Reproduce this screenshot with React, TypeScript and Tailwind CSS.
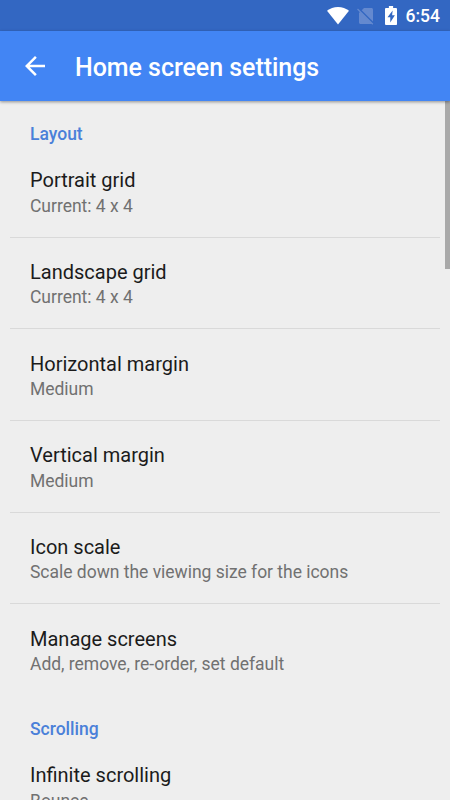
import React from 'react';

interface Preference {
  title: string;
  summary: string;
}

interface Section {
  name: string;
  items: Preference[];
}

const sections: Section[] = [
  {
    name: 'Layout',
    items: [
      { title: 'Portrait grid', summary: 'Current: 4 x 4' },
      { title: 'Landscape grid', summary: 'Current: 4 x 4' },
      { title: 'Horizontal margin', summary: 'Medium' },
      { title: 'Vertical margin', summary: 'Medium' },
      { title: 'Icon scale', summary: 'Scale down the viewing size for the icons' },
      { title: 'Manage screens', summary: 'Add, remove, re-order, set default' },
    ],
  },
  {
    name: 'Scrolling',
    items: [{ title: 'Infinite scrolling', summary: 'Bounce' }],
  },
];

const StatusBar: React.FC = () => (
  <div className="flex h-[31px] shrink-0 items-center justify-end bg-[#3367c2] pr-[10px] text-white">
    <svg className="h-[18px] w-[22px]" viewBox="0 0 22 18" fill="currentColor">
      <path d="M11 17.5 0 3.800C3 1.400 6.800 0 11 0s8 1.400 11 3.800z" />
    </svg>
    <svg className="ml-[7px] h-[18px] w-[18px]" viewBox="0 0 18 18">
      <path
        d="M8 1h7.500c.8 0 1.500.7 1.500 1.500V17H4.500C3.700 17 3 16.300 3 15.500V6z"
        fill="#6489cf"
      />
      <path d="M2.500 1.300 17.800 16.600" stroke="#3367c2" strokeWidth="1.800" />
      <path d="M1.500 2 16.800 17.300" stroke="#6489cf" strokeWidth="1.300" />
    </svg>
    <svg className="ml-[11px] h-[19px] w-3" viewBox="0 0 13 19" preserveAspectRatio="none">
      <path
        d="M4.200 0h4.600v2H12c.6 0 1 .4 1 1v15c0 .6-.4 1-1 1H1c-.6 0-1-.4-1-1V3c0-.6.400-1 1-1h3.200z"
        fill="currentColor"
      />
      <path d="M8.300 4.500 2.700 11.300h3v5.200l5-7.200H7.700z" fill="#3367c2" />
    </svg>
    <span className="ml-[9px] pt-px text-[17.5px] font-medium leading-5">6:54</span>
  </div>
);

const AppBar: React.FC = () => (
  <header className="relative z-10 flex h-[70px] shrink-0 items-center bg-[#4285f4] pl-[25px] text-white shadow-[0_1px_3px_rgba(0,0,0,0.4)]">
    <button type="button" aria-label="Back" className="flex">
      <svg className="h-5 w-5" viewBox="4 4 16 16" fill="currentColor">
        <path d="M20 11H7.830l5.590-5.590L12 4l-8 8 8 8 1.410-1.410L7.830 13H20v-2z" />
      </svg>
    </button>
    <h1 className="ml-[30px] pt-1 text-[25px] font-medium leading-[30px] tracking-[-0.04px]">
      Home screen settings
    </h1>
  </header>
);

const PreferenceRow: React.FC<Preference> = ({ title, summary }) => (
  <li className="mx-[10px] h-[91.67px] border-b border-[#d9d9d9] px-5 pt-[21.3px] last:border-transparent">
    <p className="text-[20px] leading-[26px] text-[#1b1b1b]">{title}</p>
    <p className="pt-[0.4px] text-[17.5px] leading-[24px] tracking-[-0.02px] text-[#717171]">
      {summary}
    </p>
  </li>
);

export default function App() {
  return (
    <div className="flex h-[800px] w-[450px] flex-col overflow-hidden bg-[#eeeeee] font-['Roboto',sans-serif]">
      <StatusBar />
      <AppBar />
      <main className="relative min-h-0 flex-1 overflow-hidden">
        {sections.map(({ name, items }) => (
          <section key={name}>
            <h2 className="h-[45px] px-[30px] pt-[22px] text-[17.5px] font-medium leading-[22px] text-[#4a80d9]">
              {name}
            </h2>
            <ul>
              {items.map((item) => (
                <PreferenceRow key={item.title} {...item} />
              ))}
            </ul>
          </section>
        ))}
        {/* scroll indicator */}
        <div className="absolute right-0 top-0 h-[168px] w-[5px] bg-[#a9a9a9]" />
      </main>
    </div>
  );
}
